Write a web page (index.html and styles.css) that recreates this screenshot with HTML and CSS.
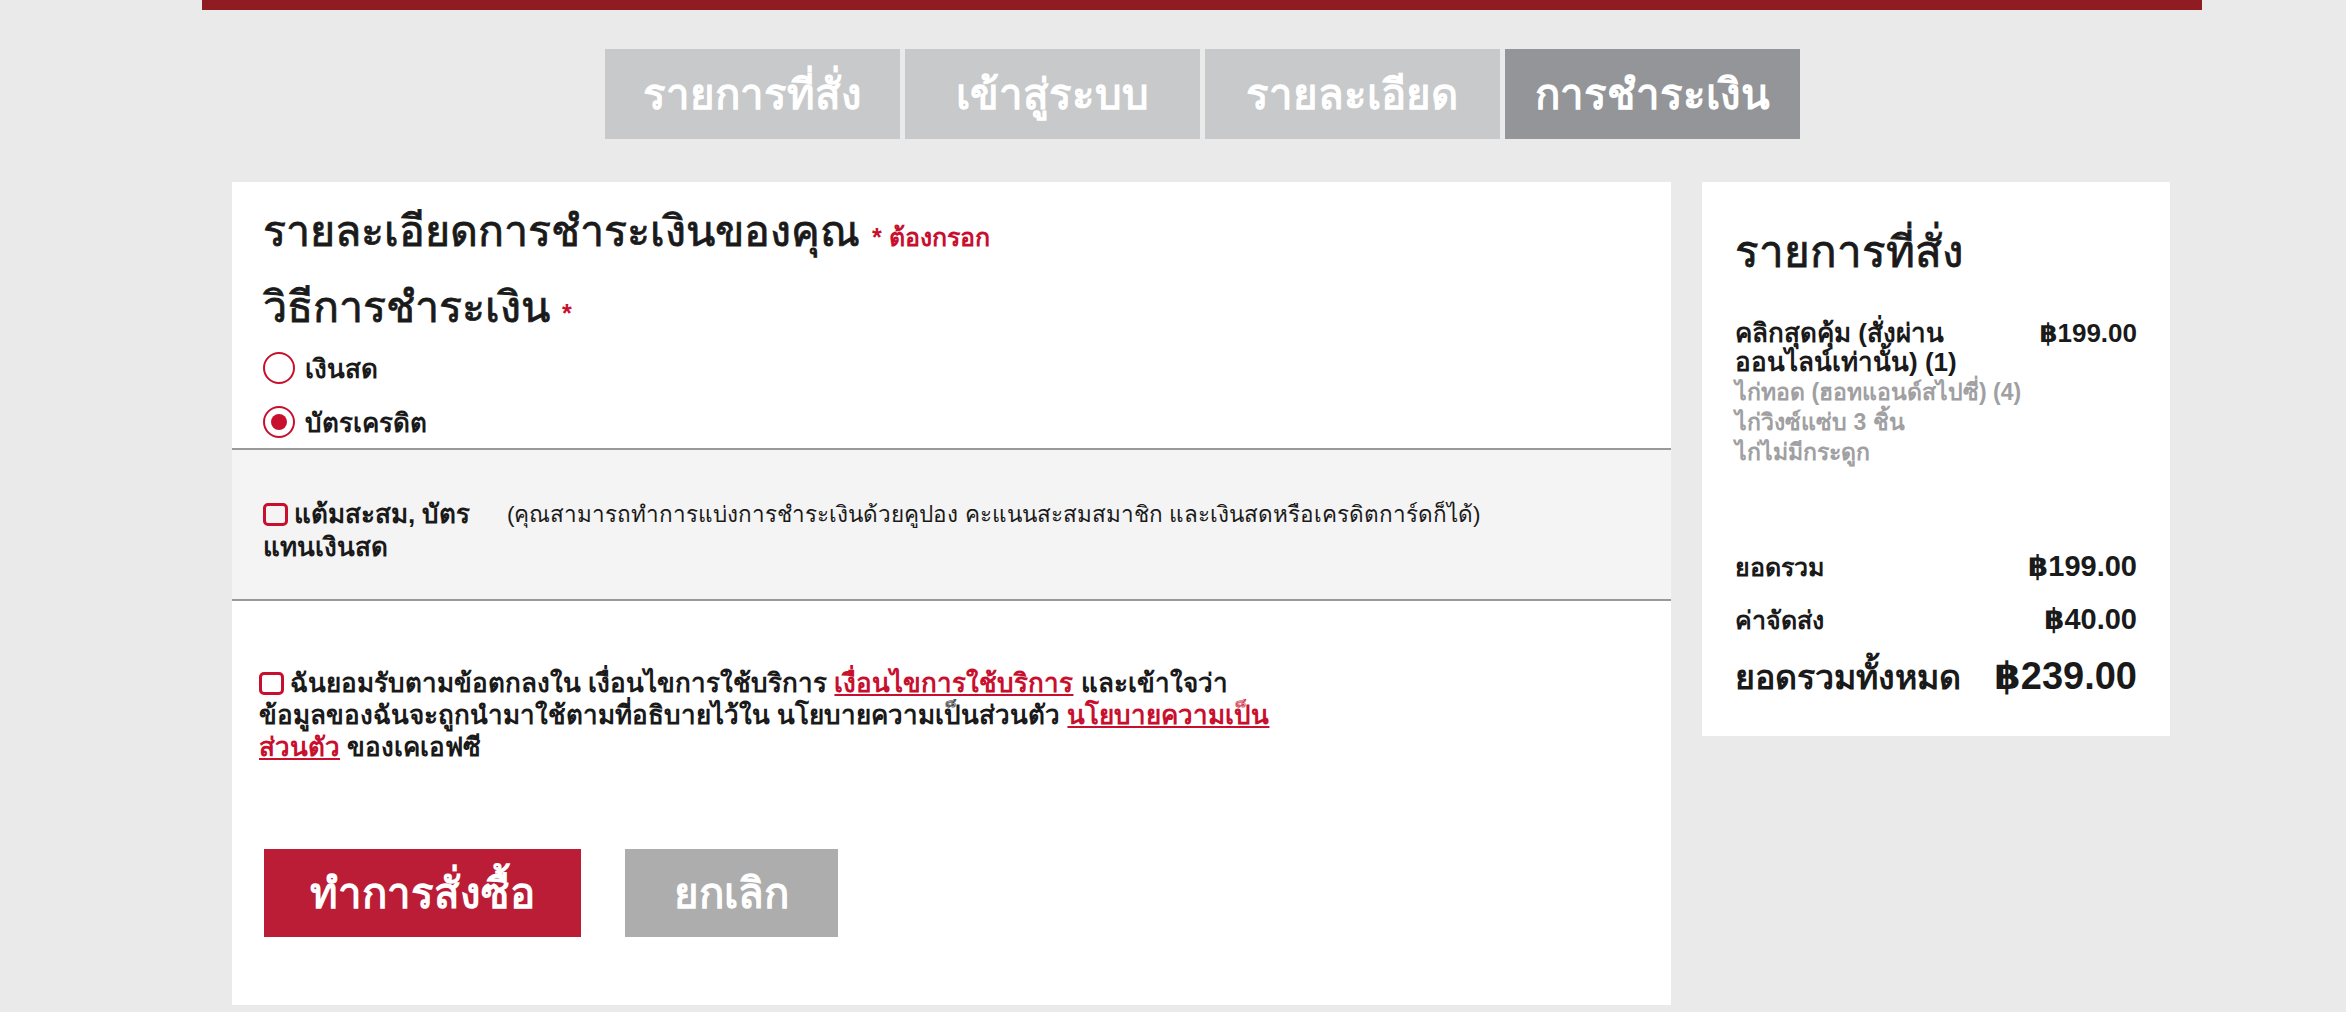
FILE: index.html
```html
<!DOCTYPE html>
<html lang="th">
<head>
  <meta charset="UTF-8">
  <meta name="viewport" content="width=device-width, initial-scale=1.0">
  <title>ชำระเงิน</title>
  <link rel="stylesheet" href="styles.css">
</head>
<body>

  <div class="page">
    <div class="topbar"></div>

    <!-- checkout steps -->
    <ul class="steps">
      <li>รายการที่สั่ง</li>
      <li>เข้าสู่ระบบ</li>
      <li>รายละเอียด</li>
      <li class="active">การชำระเงิน</li>
    </ul>

    <div class="checkout">
      <form class="card payment">
        <div class="method">
          <h1>รายละเอียดการชำระเงินของคุณ <span class="required">* ต้องกรอก</span></h1>
          <h2>วิธีการชำระเงิน <span class="required">*</span></h2>

          <label class="option">
            <span class="radio"></span>
            เงินสด
          </label>
          <label class="option">
            <span class="radio checked"></span>
            บัตรเครดิต
          </label>
        </div>

        <div class="points">
          <label class="points-label">
            <span class="check"></span>แต้มสะสม, บัตร แทนเงินสด
          </label>
          <span class="points-note">(คุณสามารถทำการแบ่งการชำระเงินด้วยคูปอง คะแนนสะสมสมาชิก และเงินสดหรือเครดิตการ์ดก็ได้)</span>
        </div>

        <div class="terms">
          <p>
            <span class="check"></span>ฉันยอมรับตามข้อตกลงใน เงื่อนไขการใช้บริการ <a href="#">เงื่อนไขการใช้บริการ</a> และเข้าใจว่า<br>
            ข้อมูลของฉันจะถูกนำมาใช้ตามที่อธิบายไว้ใน นโยบายความเป็นส่วนตัว <a href="#">นโยบายความเป็น<br>ส่วนตัว</a> ของเคเอฟซี
          </p>
        </div>

        <div class="actions">
          <button type="submit" class="btn-order">ทำการสั่งซื้อ</button>
          <button type="button" class="btn-cancel">ยกเลิก</button>
        </div>
      </form>

      <aside class="card summary">
        <h2>รายการที่สั่ง</h2>

        <div class="item">
          <div class="item-name">คลิกสุดคุ้ม (สั่งผ่าน<br>ออนไลน์เท่านั้น) (1)</div>
          <div class="item-price">฿199.00</div>
        </div>
        <ul class="item-parts">
          <li>ไก่ทอด (ฮอทแอนด์สไปซี่) (4)</li>
          <li>ไก่วิงซ์แซ่บ 3 ชิ้น</li>
          <li>ไก่ไม่มีกระดูก</li>
        </ul>

        <div class="totals">
          <div class="row"><span>ยอดรวม</span><span class="amount">฿199.00</span></div>
          <div class="row"><span>ค่าจัดส่ง</span><span class="amount">฿40.00</span></div>
          <div class="row grand"><span>ยอดรวมทั้งหมด</span><span class="amount">฿239.00</span></div>
        </div>
      </aside>
    </div>
  </div>

</body>
</html>
```

FILE: styles.css
```css
/* Reset styling */
* {
  margin: 0;
  padding: 0;
  box-sizing: border-box;
}

body {
  font-family: "Liberation Sans", "DejaVu Sans", sans-serif;
  background: #eaeaea;
  color: #1a1a1a;
  overflow: hidden;
}

.page {
  width: 2000px;
  margin-left: 202px;
}

.topbar {
  height: 10px;
  background-color: #8f1b23;
}

/* Steps */
.steps {
  list-style: none;
  display: flex;
  justify-content: center;
  gap: 5px;
  margin-top: 39px;
}

.steps li {
  width: 295px;
  height: 90px;
  background-color: #c8c9ca;
  color: white;
  font-size: 42px;
  font-weight: bold;
  display: flex;
  align-items: center;
  justify-content: center;
}

.steps li.active {
  background-color: #939598;
}

/* Columns */
.checkout {
  display: flex;
  align-items: flex-start;
  gap: 31px;
  margin: 43px 0 0 30px;
}

.card {
  background-color: white;
}

.payment {
  width: 1439px;
  height: 823px;
}

/* medium-weight headings (the font has no 500) */
.method h1,
.method h2,
.summary h2 {
  font-weight: normal;
  -webkit-text-stroke: 0.8px currentColor;
}

.required {
  color: #c8102e;
  font-size: 25px;
  font-weight: bold;
  -webkit-text-stroke: 0;
}

.method {
  padding: 20px 31px 6px;
}

.method h1 {
  font-size: 43px;
  line-height: 58px;
}

.method h2 {
  font-size: 43px;
  line-height: 50px;
  margin-top: 16px;
}

.option {
  display: flex;
  align-items: center;
  gap: 10px;
  font-size: 26px;
  font-weight: bold;
  height: 40px;
  margin-top: 10px;
}

.option + .option {
  margin-top: 14px;
}

.radio {
  width: 32px;
  height: 32px;
  border: 2px solid #c8102e;
  border-radius: 50%;
  display: flex;
  align-items: center;
  justify-content: center;
}

.radio.checked::after {
  content: "";
  width: 16px;
  height: 16px;
  border-radius: 50%;
  background-color: #c8102e;
}

.check {
  display: inline-block;
  width: 25px;
  height: 23px;
  border: 3px solid #c8102e;
  border-radius: 5px;
  vertical-align: -3px;
  margin-right: 6px;
}

/* Points box */
.points {
  background-color: #f4f4f4;
  border-top: 2px solid #999;
  border-bottom: 2px solid #999;
  height: 153px;
  padding: 12px 31px 0;
  display: flex;
  align-items: center;
  gap: 14px;
}

.points-label {
  width: 230px;
  font-size: 26px;
  font-weight: bold;
  line-height: 33px;
}

.points-note {
  font-size: 22.5px;
  margin-top: -33px;
}

/* Terms */
.terms {
  padding: 66px 27px 0;
  font-size: 26px;
  font-weight: bold;
  line-height: 32px;
}

.terms a {
  color: #c8102e;
}

/* Buttons */
.actions {
  display: flex;
  gap: 44px;
  padding: 86px 32px 0;
}

.actions button {
  height: 88px;
  border: none;
  color: white;
  font-family: inherit;
  font-size: 42px;
  font-weight: bold;
  cursor: pointer;
}

.btn-order {
  width: 317px;
  background-color: #bb1d37;
}

.btn-cancel {
  width: 213px;
  background-color: #adadad;
}

/* Order summary */
.summary {
  width: 468px;
  height: 554px;
  padding: 40px 33px 0;
}

.summary h2 {
  font-size: 44px;
  line-height: 60px;
  margin-bottom: 37px;
}

.item {
  display: flex;
  justify-content: space-between;
  font-size: 26px;
  font-weight: bold;
  line-height: 29px;
}

.item-parts {
  list-style: none;
  color: #a0a0a2;
  font-size: 23px;
  font-weight: bold;
  line-height: 30px;
}

.totals {
  margin-top: 73px;
  font-weight: bold;
}

.totals .row {
  display: flex;
  justify-content: space-between;
  align-items: baseline;
  font-size: 25px;
  line-height: 52px;
}

.totals .amount {
  font-size: 29px;
}

.totals .row.grand {
  font-size: 34px;
  line-height: 60px;
}

.totals .row.grand .amount {
  font-size: 38px;
}
```
